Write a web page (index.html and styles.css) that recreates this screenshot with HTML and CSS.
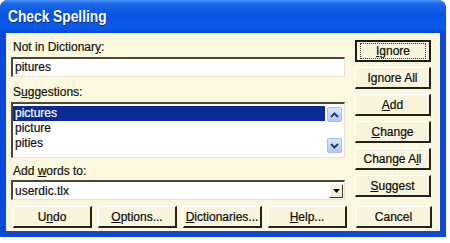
FILE: index.html
```html
<!DOCTYPE html>
<html lang="en">
<head>
<meta charset="UTF-8">
<title>Check Spelling</title>
<link rel="stylesheet" href="styles.css">
</head>
<body>
<div class="window">
    <div class="titlebar">
        <span class="title">Check Spelling</span>
    </div>

    <div class="client">
        <div class="top">
            <!-- left side: word, suggestions, dictionary -->
            <div class="left">
                <div class="lbl">Not in Dictionar<u>y</u>:</div>
                <div class="field">pitures</div>

                <div class="lbl lbl-sug">S<u>u</u>ggestions:</div>
                <div class="list">
                    <div class="rows">
                        <div class="row sel">pictures</div>
                        <div class="row">picture</div>
                        <div class="row">pities</div>
                    </div>
                    <div class="scroll">
                        <span class="sb">
                            <svg width="9" height="6" viewBox="0 0 9 6"><path d="M1 5 L4.5 1.5 L8 5" fill="none" stroke="#243c7c" stroke-width="2"/></svg>
                        </span>
                        <span class="sb">
                            <svg width="9" height="6" viewBox="0 0 9 6"><path d="M1 1 L4.5 4.5 L8 1" fill="none" stroke="#243c7c" stroke-width="2"/></svg>
                        </span>
                    </div>
                </div>

                <div class="lbl lbl-add">Add <u>w</u>ords to:</div>
                <div class="combo">
                    <span>userdic.tlx</span>
                    <span class="drop">
                        <svg width="7" height="4" viewBox="0 0 7 4"><path d="M0 0 H7 L3.5 4 Z" fill="#000"/></svg>
                    </span>
                </div>
            </div>

            <!-- right side buttons -->
            <div class="side">
                <button class="btn default"><span class="focus"><u>I</u>gnore</span></button>
                <button class="btn">I<u>g</u>nore All</button>
                <button class="btn"><u>A</u>dd</button>
                <button class="btn"><u>C</u>hange</button>
                <button class="btn">Change A<u>l</u>l</button>
                <button class="btn"><u>S</u>uggest</button>
            </div>
        </div>

        <div class="bottom">
            <button class="btn">U<u>n</u>do</button>
            <button class="btn"><u>O</u>ptions...</button>
            <button class="btn"><u>D</u>ictionaries...</button>
            <button class="btn"><u>H</u>elp...</button>
            <button class="btn cancel">Cancel</button>
        </div>
    </div>
</div>
</body>
</html>
```

FILE: styles.css
```css
body {
margin: 0;
padding: 0;
background-color: #ffffff;
font-family: "Liberation Sans", Arial, sans-serif;
}
.window {
width: 446px;
height: 237px;
box-sizing: border-box;
background-color: #0b49d6;
border-radius: 8px 8px 0 0;
padding: 0 6px 6px 6px;
display: flex;
flex-direction: column;
}
.titlebar {
height: 33px;
margin: 0 -6px;
padding: 0 8px;
border-radius: 8px 8px 0 0;
background: linear-gradient(#4a93f7 0%, #1a66ea 12%, #0a55e2 45%, #0a5aea 85%, #0a49d0 100%);
display: flex;
align-items: center;
}
.title {
display: inline-block;
color: #ffffff;
font-weight: bold;
font-size: 16px;
transform: scaleX(0.86);
transform-origin: left center;
text-shadow: 1px 1px 0 #0a2a80;
}
.client {
flex: 1;
background-color: #fcf8e0;
padding: 7px 8px 0 5px;
-webkit-text-stroke: 0.2px currentColor;
}
.top {
display: flex;
gap: 10px;
}
.left {
width: 334px;
display: flex;
flex-direction: column;
}
.lbl {
font-size: 12px;
line-height: 15px;
color: #141408;
padding-left: 2px;
}
.lbl-sug {
margin-top: 8px;
}
.lbl-add {
margin-top: 6px;
}
.field {
margin-top: 2px;
height: 20px;
box-sizing: border-box;
background-color: #ffffff;
border-top: 2px solid #4a4838;
border-left: 2px solid #4a4838;
border-right: 1px solid #e8e4d0;
border-bottom: 1px solid #e8e4d0;
font-size: 12px;
line-height: 17px;
padding-left: 2px;
color: #111;
}
.list {
margin-top: 2px;
height: 56px;
box-sizing: border-box;
background-color: #ffffff;
border-top: 2px solid #4a4838;
border-left: 2px solid #4a4838;
border-right: 1px solid #e8e4d0;
border-bottom: 1px solid #e8e4d0;
display: flex;
padding: 2px 1px 1px 0;
}
.rows {
flex: 1;
}
.row {
font-size: 12px;
line-height: 15px;
padding-left: 2px;
color: #111;
}
.row.sel {
background-color: #0c2a96;
color: #ffffff;
}
.scroll {
width: 16px;
display: flex;
flex-direction: column;
justify-content: space-between;
padding: 1px 0 3px 2px;
}
.sb {
width: 15px;
height: 15px;
box-sizing: border-box;
border: 1px solid #a8bcee;
border-radius: 2px;
background: linear-gradient(#dce6fe, #b4c8fa);
display: flex;
align-items: center;
justify-content: center;
}
.combo {
margin-top: 1px;
height: 20px;
box-sizing: border-box;
background-color: #ffffff;
border-top: 2px solid #4a4838;
border-left: 2px solid #4a4838;
border-right: 1px solid #e8e4d0;
border-bottom: 1px solid #e8e4d0;
display: flex;
justify-content: space-between;
align-items: center;
font-size: 12px;
padding-left: 2px;
padding-right: 1px;
color: #111;
}
.drop {
width: 14px;
height: 14px;
box-sizing: border-box;
background-color: #f4f0dc;
border-top: 1px solid #ffffff;
border-left: 1px solid #ffffff;
border-right: 1px solid #3a3828;
border-bottom: 1px solid #3a3828;
display: flex;
align-items: center;
justify-content: center;
}
.side {
width: 76px;
display: flex;
flex-direction: column;
gap: 5px;
}
.btn {
height: 22px;
box-sizing: border-box;
background-color: #f8f4de;
border: none;
border-top: 1px solid #ffffff;
border-left: 1px solid #ffffff;
border-right: 2px solid #24231a;
border-bottom: 2px solid #24231a;
font-family: "Liberation Sans", Arial, sans-serif;
font-size: 12px;
color: #0c0c06;
padding: 0;
-webkit-text-stroke: 0.2px currentColor;
}
.btn.default {
border: 2px solid #1c1b12;
}
.focus {
display: block;
margin: 0 3px;
border: 1px dotted #3a3828;
line-height: 14px;
}
.bottom {
display: flex;
gap: 6px;
margin-top: 6px;
padding-left: 2px;
}
.bottom .btn {
width: 79px;
}
.bottom .cancel {
width: 76px;
margin-left: auto;
}
```
